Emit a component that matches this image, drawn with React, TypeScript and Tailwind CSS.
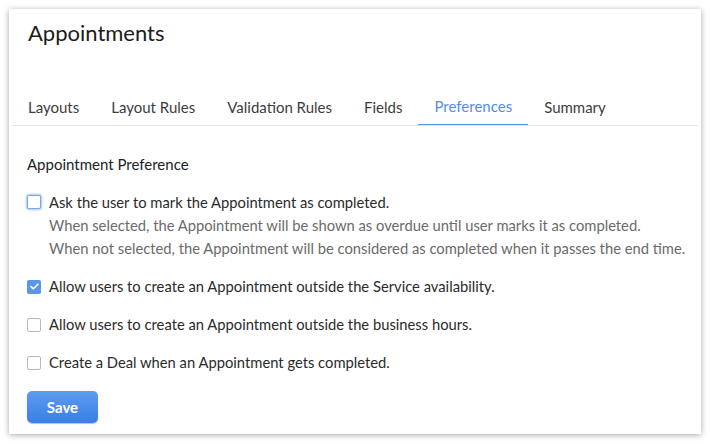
import React from "react";

function Box({ checked, focused }: { checked?: boolean; focused?: boolean }) {
  if (checked) {
    return (
      <span className="flex h-[14px] w-[14px] shrink-0 items-center justify-center rounded-[2px] bg-[#5b95e6]">
        <svg width="9" height="7" viewBox="0 0 9 7" fill="none">
          <path d="M1 3.6 L3.4 5.8 L8 1.2" stroke="white" strokeWidth="1.6" strokeLinecap="round" strokeLinejoin="round" />
        </svg>
      </span>
    );
  }
  return (
    <span
      className={
        focused
          ? "block h-[14px] w-[14px] shrink-0 rounded-[2px] border border-[#7aa7ec] bg-white shadow-[0_0_2px_1px_rgba(100,150,230,0.55)]"
          : "block h-[14px] w-[14px] shrink-0 rounded-[2px] border border-[#b9b9b9] bg-white"
      }
    />
  );
}

const tabs = ["Layouts", "Layout Rules", "Validation Rules", "Fields", "Preferences", "Summary"];

export default function App() {
  return (
    <div className="h-[444px] w-[710px] bg-white pl-[9px] pt-[9px]" style={{ fontFamily: "Lato, 'Open Sans', sans-serif" }}>
      <div className="h-[425px] w-[692px] bg-white shadow-[0_1px_6px_rgba(0,0,0,0.35)]">
        <div className="pl-[19px] pt-[10px] text-[22px] leading-[28px] text-[#1c1c1c]">Appointments</div>
        <div className="mx-[3px] mt-[42px] flex border-b border-[#e4e4e4]">
          {tabs.map((t) => (
            <div
              key={t}
              className={
                t === "Preferences"
                  ? "-mb-px flex h-[36px] items-center border-b border-[#5a93e8] px-4 text-[15px] text-[#4f8fe8]"
                  : "flex h-[36px] items-center px-4 text-[15px] text-[#3d3d3d]"
              }
            >
              {t}
            </div>
          ))}
        </div>
        <div className="pl-[18px]">
          <div className="mt-[27px] text-[15px] leading-[22px] text-[#222]">Appointment Preference</div>
          <div className="mt-[16px] flex gap-[8px]">
            <div className="pt-[4px]">
              <Box focused />
            </div>
            <div className="text-[14.75px] leading-[23px]">
              <div className="text-[#2a2a2a]">Ask the user to mark the Appointment as completed.</div>
              <div className="text-[#6a6a6a]">When selected, the Appointment will be shown as overdue until user marks it as completed.</div>
              <div className="text-[#6a6a6a]">When not selected, the Appointment will be considered as completed when it passes the end time.</div>
            </div>
          </div>
          <div className="mt-[15px] flex items-center gap-[8px] text-[14.75px] leading-[23px] text-[#2a2a2a]">
            <Box checked />
            <span>Allow users to create an Appointment outside the Service availability.</span>
          </div>
          <div className="mt-[15px] flex items-center gap-[8px] text-[14.75px] leading-[23px] text-[#2a2a2a]">
            <Box />
            <span>Allow users to create an Appointment outside the business hours.</span>
          </div>
          <div className="mt-[15px] flex items-center gap-[8px] text-[14.75px] leading-[23px] text-[#2a2a2a]">
            <Box />
            <span>Create a Deal when an Appointment gets completed.</span>
          </div>
          <button className="mt-[17px] h-[32px] w-[71px] rounded-[5px] bg-gradient-to-b from-[#5c9cf0] to-[#3a7ee6] text-[15px] font-bold text-white shadow-[0_1px_1px_rgba(0,0,0,0.25)]">
            Save
          </button>
        </div>
      </div>
    </div>
  );
}
